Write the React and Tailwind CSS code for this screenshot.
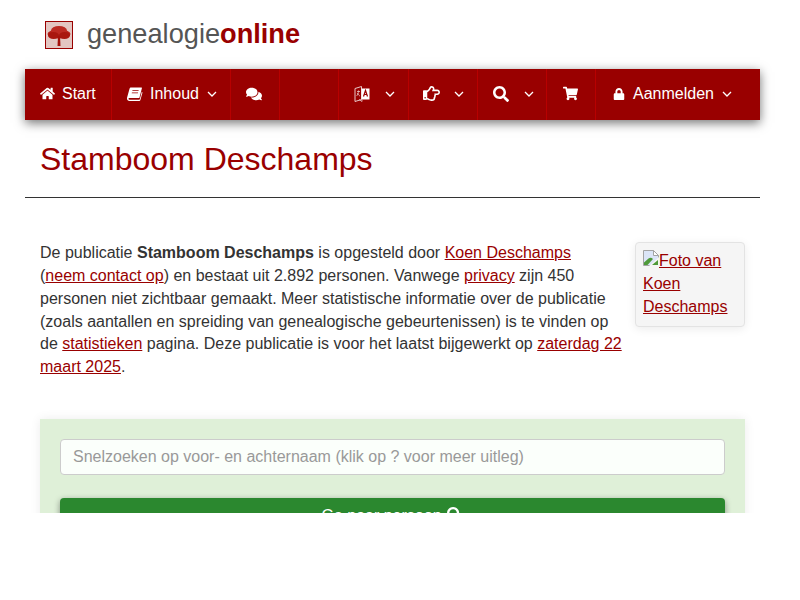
import React from "react";
import {
  FaHome,
  FaComments,
  FaRegHandPointRight,
  FaSearch,
  FaShoppingCart,
  FaLock,
} from "react-icons/fa";

const Chevron = ({ className }) => (
  <svg width="10" height="6" viewBox="0 0 10 6" fill="none" stroke="currentColor" strokeWidth="1.3" className={className}>
    <path d="M1 1l4 4 4-4" />
  </svg>
);

const BookIcon = () => (
  <svg width="16" height="14" viewBox="0 0 16 14" fill="currentColor">
    <path d="M4 0.5h10.5c.4 0 .5.3.4.7l-2.4 9.3c-.1.4-.4.6-.8.6H2.5c-.7 0-1 .4-1 .8s.4.8 1 .8h9.6c.4 0 .6-.2.7-.5l2-7.4.7.6-2.2 7.8c-.1.4-.5.8-1 .8H2.5C1 14 0 13 0 11.5c0-.3 0-.6.1-.9L2.6 1.6C2.8 1 3.3.5 4 .5z" />
    <path d="M5.5 3.2h6.2l-.2.9H5.3zM4.9 5.4h6.2l-.2.9H4.7z" fill="#990000" />
  </svg>
);

const TranslateIcon = () => (
  <svg width="16" height="16" viewBox="0 0 16 16">
    <path d="M1 2.5l6.5-2v13l-6.5 2z" fill="none" stroke="#e8c8c8" strokeWidth="1" />
    <path d="M3 5.5h3M4.5 4.5c0 3-1 4.5-2 5.5M3.5 7c.5 1.5 1.5 2.5 2.5 3" fill="none" stroke="#e8c8c8" strokeWidth="0.8" />
    <path d="M7.5 2.5h8v11h-8z" fill="#ffffff" />
    <path d="M9.5 10.5l2-6 2 6M10.3 8.5h2.4" fill="none" stroke="#990000" strokeWidth="1.2" />
    <path d="M5 13.5l3 2v-2" fill="none" stroke="#e8c8c8" strokeWidth="0.8" />
  </svg>
);

const NavItem = ({ icon, label, chevron, className, chevronClass }) => (
  <div className={`flex items-center h-full pb-[2px] border-r border-[#b80000] text-white text-base ${className}`}>
    {icon}
    {label && <span className="ml-[7px]">{label}</span>}
    {chevron && <Chevron className={chevronClass} />}
  </div>
);

const TreeLogo = () => (
  <div className="mt-[2px] w-[28px] h-[28px] border border-[#990000] bg-[#e3c6c2] flex items-center justify-center">
    <svg width="26" height="26" viewBox="0 0 26 26">
      <ellipse cx="13" cy="12" rx="11.5" ry="4.5" fill="#b5211a" />
      <ellipse cx="13" cy="8.5" rx="8" ry="4.5" fill="#bc2a22" />
      <ellipse cx="7.5" cy="13.5" rx="5.5" ry="3.5" fill="#a9170f" />
      <ellipse cx="18.5" cy="13.5" rx="5.5" ry="3.5" fill="#a9170f" />
      <path d="M12 14h2l.5 10h-3z" fill="#a5120b" />
    </svg>
  </div>
);

const BrokenImage = () => (
  <svg width="16" height="16" viewBox="0 0 16 16" className="inline-block align-baseline">
    <path d="M0.5 0.5h10l5 5v10h-15z" fill="#dbe5f7" stroke="#a3a3a3" />
    <path d="M1 15v-2.5l4.5-4c1.5-1 3-1 4.5.5l-5.5 6z" fill="#4f9a3a" />
    <path d="M10.5 0.5v5h5z" fill="#ffffff" stroke="#a3a3a3" />
    <path d="M6 16l10-9v9z" fill="#f5f5f5" />
    <path d="M9 15l6-5v5z" fill="#4f9a3a" />
  </svg>
);

const A = ({ children }) => <a className="text-[#990000] underline">{children}</a>;

export default function App() {
  return (
    <div className="h-[513px] overflow-hidden bg-white pl-[25px] pr-[40px] font-['Liberation_Sans',sans-serif] text-[#333333]">
      {/* Logo */}
      <div className="flex items-center h-[69px] pl-[20px] pb-[1px]">
        <TreeLogo />
        <div className="ml-[14px] text-[27.2px] text-[#555555]">
          genealogie<span className="font-bold text-[#990000]">online</span>
        </div>
      </div>

      {/* Nav */}
      <div className="flex items-center h-[51px] bg-[#990000] shadow-[0_3px_10px_rgba(0,0,0,0.55)]">
        <NavItem icon={<FaHome size={15} />} label="Start" className="pl-[15px] w-[87px]" />
        <NavItem icon={<BookIcon />} label="Inhoud" chevron chevronClass="ml-[8px]" className="pl-[15px] w-[119px]" />
        <NavItem icon={<FaComments size={16} />} className="pl-[15px] w-[49px]" />
        <NavItem className="w-[59px]" />
        <NavItem icon={<TranslateIcon />} chevron chevronClass="ml-[15px]" className="pl-[15px] w-[70px]" />
        <NavItem icon={<FaRegHandPointRight size={17} />} chevron chevronClass="ml-[14px]" className="pl-[14px] w-[69px]" />
        <NavItem icon={<FaSearch size={16} />} chevron chevronClass="ml-[15px]" className="pl-[15px] w-[69px]" />
        <NavItem icon={<FaShoppingCart size={15} />} className="pl-[16px] w-[49px]" />
        <div className="flex items-center h-full pb-[2px] pl-[17px] text-white text-base">
          <FaLock size={12} />
          <span className="ml-[8px]">Aanmelden</span>
          <Chevron className="ml-[8px]" />
        </div>
      </div>

      {/* Title */}
      <div className="h-[78px] border-b border-[#333333] px-[15px] flex items-center">
        <h1 className="text-[32px] text-[#990000]">Stamboom Deschamps</h1>
      </div>

      {/* Intro */}
      <div className="flex justify-between px-[15px] pt-[44px]">
        <p className="text-base leading-[22.85px]">
          De publicatie <b>Stamboom Deschamps</b> is opgesteld door <A>Koen Deschamps</A>
          <br />
          (<A>neem contact op</A>) en bestaat uit 2.892 personen. Vanwege <A>privacy</A> zijn 450
          <br />
          personen niet zichtbaar gemaakt. Meer statistische informatie over de publicatie
          <br />
          (zoals aantallen en spreiding van genealogische gebeurtenissen) is te vinden op
          <br />
          de <A>statistieken</A> pagina. Deze publicatie is voor het laatst bijgewerkt op <A>zaterdag 22</A>
          <br />
          <A>maart 2025</A>.
        </p>
        <div className="w-[110px] h-[85px] bg-[#f5f5f5] border border-[#e3e3e3] rounded-[4px] pt-[6px] px-[7px] text-base leading-[23px] shadow-[0_2px_10px_rgba(0,0,0,0.08)]">
          <a className="text-[#990000] underline">
            <BrokenImage />Foto van Koen Deschamps
          </a>
        </div>
      </div>

      {/* Search */}
      <div className="mx-[15px] mt-[40px] bg-[#dff0d8] px-[20px] pt-[20px] h-[200px] shadow-[0_0_10px_rgba(0,0,0,0.08)]">
        <div className="h-[36px] bg-[#fbfffb] border border-[#cccccc] rounded-[4px] px-[12px] flex items-center text-base text-[#999999]">
          Snelzoeken op voor- en achternaam (klik op ? voor meer uitleg)
        </div>
        <button className="mt-[23px] w-full h-[36px] bg-[#2b882f] rounded-[4px] text-white text-base shadow-[0_2px_6px_rgba(0,0,0,0.4)] flex items-start justify-center pt-[6px] pr-[2px]">
          Ga naar persoon <FaSearch size={15} className="ml-[5px] mt-[3px]" />
        </button>
      </div>
    </div>
  );
}
